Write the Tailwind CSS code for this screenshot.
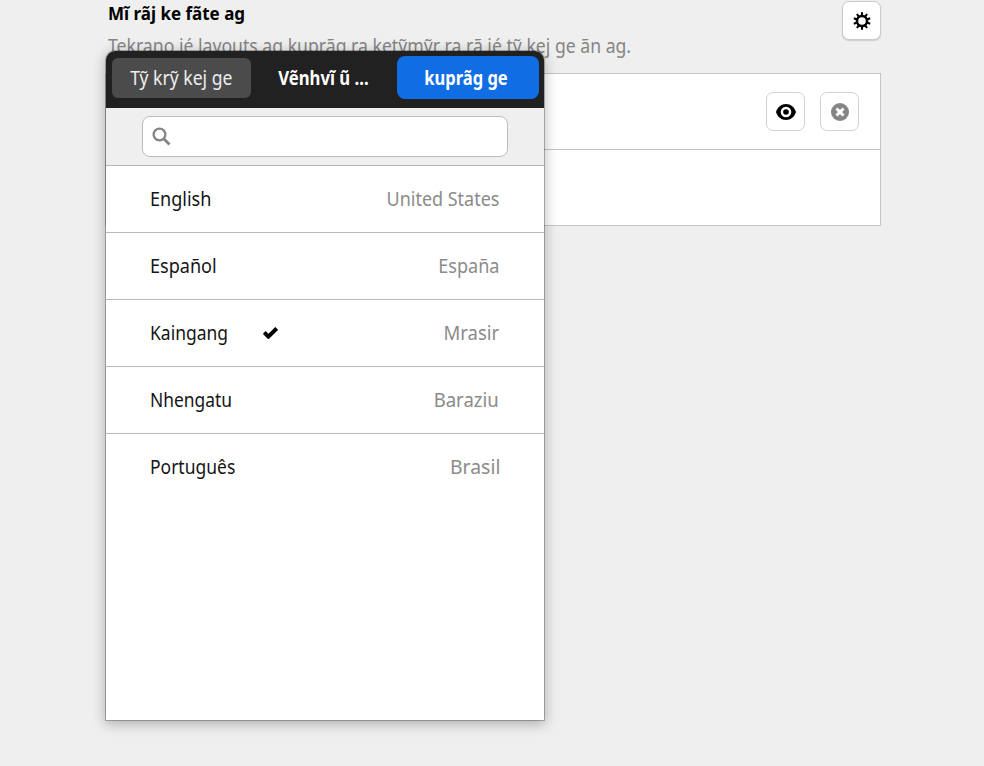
<!DOCTYPE html>
<html lang="kgp">
<head>
<meta charset="utf-8">
<title>Mĩ rãj ke fãte ag</title>
<script src="https://cdn.jsdelivr.net/npm/@tailwindcss/browser@4"></script>
</head>
<body class="relative h-[766px] w-[984px] overflow-hidden bg-[#efefef] font-['Noto_Sans',sans-serif] text-[19px] leading-[26px] text-[#151515]">
<main class="ml-[105px] w-[776px]">
  <header class="flex h-[73px] items-start justify-between pl-[3px]">
    <div class="whitespace-nowrap">
      <h1 class="h-[33px] w-max origin-left scale-x-[.918] text-[18.5px] font-bold text-black">Mĩ rãj ke fãte ag</h1>
      <p class="w-max origin-left scale-x-[.928] text-[#858585]">Tekrano jé layouts ag kuprãg ra ketỹmỹr ra rã jé tỹ kej ge ãn ag.</p>
    </div>
    <button class="mt-px flex size-[39px] items-center justify-center rounded-[7px] border border-[#cacaca] bg-white shadow-[0_1px_1px_#ccc]">
      <svg class="size-[18px]" viewBox="0 0 20 20" fill="none" stroke="#000"><circle cx="10" cy="10" r="5.600" stroke-width="2.800"/><g stroke-width="2.300"><path d="M10 .4v4M10 15.600v4"/><path d="M10 .4v4M10 15.600v4" transform="rotate(36 10 10)"/><path d="M10 .4v4M10 15.600v4" transform="rotate(72 10 10)"/><path d="M10 .4v4M10 15.600v4" transform="rotate(108 10 10)"/><path d="M10 .4v4M10 15.600v4" transform="rotate(144 10 10)"/></g></svg>
    </button>
  </header>
  <section class="h-[153px] border border-[#c5c5c5] bg-white">
    <div class="flex h-[76px] items-center justify-end gap-[15px] border-b border-[#c5c5c5] pr-[21px]">
      <button class="flex size-[39px] items-center justify-center rounded-[7px] border border-[#d2d2d2] bg-white">
        <svg class="h-[16px] w-[20px]" viewBox="0 0 20 16"><path fill-rule="evenodd" d="M10 0C5.300 0 1.500 3.200 0 8c1.500 4.800 5.300 8 10 8s8.500-3.200 10-8C18.500 3.200 14.700 0 10 0zm0 2.700a5.300 5.300 0 1 1 0 10.600 5.300 5.300 0 0 1 0-10.600z"/><circle cx="10" cy="8" r="2.800"/></svg>
      </button>
      <button class="flex size-[39px] items-center justify-center rounded-[7px] border border-[#d2d2d2] bg-white">
        <svg class="size-[18px]" viewBox="0 0 18 18"><circle cx="9" cy="9" r="9" fill="#858585"/><path d="M5.500 5.500l7 7M12.500 5.500l-7 7" stroke="#fff" stroke-width="3"/></svg>
      </button>
    </div>
  </section>
</main>

<div role="dialog" class="absolute top-[50.5px] left-[105.500px] flex h-[669px] w-[438px] flex-col overflow-hidden rounded-t-[9px] bg-white shadow-[0_0_0_1px_rgba(0,0,0,.25),0_3px_13px_1px_rgba(0,0,0,.28)]">
  <div class="flex h-[57.5px] shrink-0 items-center bg-[#212121] pr-[5px] pb-[3px] pl-[6.5px] whitespace-nowrap text-white">
    <button class="mt-px flex h-[40px] w-[139px] items-center justify-center rounded-[6px] bg-[#4b4b4b] text-[#eeeeee]"><span class="scale-x-[.925]">Tỹ krỹ kej ge</span></button>
    <div class="flex flex-1 justify-center font-bold"><span class="scale-x-[.88]">Vẽnhvĩ ũ ...</span></div>
    <button class="flex h-[43px] w-[142px] items-center justify-center rounded-[8px] bg-[#106de4] font-bold"><span class="-ml-[3px] scale-x-[.87]">kuprãg ge</span></button>
  </div>
  <div class="flex h-[57.5px] shrink-0 justify-center border-b border-[#b5b5b5] bg-[#efefef] pt-[8px]">
    <div class="flex h-[41px] w-[366px] items-center rounded-[8px] border border-[#bcbcbc] bg-white pl-[9px]">
      <svg class="size-[19px]" viewBox="0 0 19 19" fill="none" stroke="#858585"><circle cx="7.500" cy="7.500" r="5.900" stroke-width="2.300"/><path d="M11.500 11.500l6 6" stroke-width="2.800"/></svg>
    </div>
  </div>
  <ul>
    <li class="flex h-[67px] items-center justify-between border-b border-[#b9b9b9] px-[44.5px]"><span class="origin-left scale-x-[.95]">English</span><span class="origin-right scale-x-[.945] text-[#8b8b8b]">United States</span></li>
    <li class="flex h-[67px] items-center justify-between border-b border-[#b9b9b9] px-[44.5px]"><span class="origin-left scale-x-[.95]">Español</span><span class="origin-right scale-x-[.95] text-[#8b8b8b]">España</span></li>
    <li class="flex h-[67px] items-center border-b border-[#b9b9b9] px-[44.5px]"><span class="w-[113px]"><span class="inline-block origin-left scale-x-[.92]">Kaingang</span></span>
      <svg class="h-[12px] w-[15px]" viewBox="0 0 15 12" fill="none" stroke="#000" stroke-width="4"><path d="M1.200 5.500l4.200 4.100 8.300-8.200"/></svg>
      <span class="ml-auto origin-right scale-x-[.975] text-[#8b8b8b]">Mrasir</span></li>
    <li class="flex h-[67px] items-center justify-between border-b border-[#b9b9b9] px-[44.5px]"><span class="origin-left scale-x-[.915]">Nhengatu</span><span class="origin-right scale-x-[.975] text-[#8b8b8b]">Baraziu</span></li>
    <li class="flex h-[66px] items-center justify-between px-[44.5px]"><span class="origin-left scale-x-[.92]">Português</span><span class="-mr-px origin-right scale-x-[1.02] text-[#8b8b8b]">Brasil</span></li>
  </ul>
</div>
</body>
</html>
